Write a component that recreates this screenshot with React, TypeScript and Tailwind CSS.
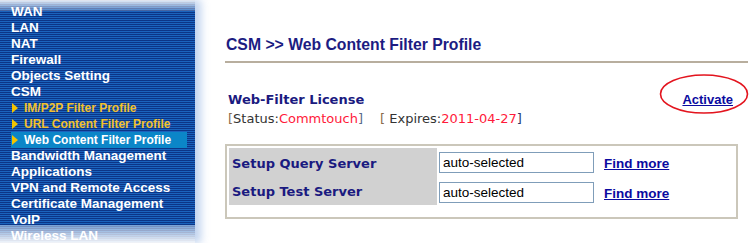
import React from "react";

const menu: { label: string; sub?: boolean; active?: boolean }[] = [
  { label: "WAN" },
  { label: "LAN" },
  { label: "NAT" },
  { label: "Firewall" },
  { label: "Objects Setting" },
  { label: "CSM" },
  { label: "IM/P2P Filter Profile", sub: true },
  { label: "URL Content Filter Profile", sub: true },
  { label: "Web Content Filter Profile", sub: true, active: true },
  { label: "Bandwidth Management" },
  { label: "Applications" },
  { label: "VPN and Remote Access" },
  { label: "Certificate Management" },
  { label: "VoIP" },
  { label: "Wireless LAN" },
];

function Sidebar() {
  return (
    <div className="relative w-[195px] h-[243px] shrink-0 overflow-hidden bg-[repeating-linear-gradient(to_bottom,#0c3587_0px,#0c3587_1px,#1a63bd_1px,#1a63bd_2px)] shadow-[6px_0_8px_rgba(120,160,220,0.45)]">
      <ul className="pt-[4px] font-['Liberation_Sans',Arial,sans-serif] font-bold leading-[16px]">
        {menu.map((m) => (
          <li
            key={m.label}
            className={`ml-[11px] w-[176px] h-[16px] flex items-center whitespace-nowrap ${
              m.sub ? "text-[12px]" : "text-[13.5px]"
            } ${m.active ? "bg-[#0b86c8] text-white" : m.sub ? "text-[#f2c12e]" : "text-white"}`}
          >
            {m.sub && (
              <span className="ml-[1px] mr-[6px] w-0 h-0 border-y-[5px] border-y-transparent border-l-[6px] border-l-[#f4c400]" />
            )}
            {m.label}
          </li>
        ))}
      </ul>
      {/* fade at top and bottom */}
      <div className="absolute inset-x-0 top-0 h-[11px] bg-gradient-to-b from-white/90 to-white/20" />
      <div className="absolute inset-x-0 bottom-0 h-[18px] bg-gradient-to-t from-white/95 to-white/40" />
    </div>
  );
}

export default function App() {
  return (
    <div className="flex w-[752px] h-[243px] bg-white overflow-hidden">
      <Sidebar />

      <div className="flex-1 pl-[30px] pt-[35px]">
        <h1 className="pl-[1px] font-['Liberation_Sans',Arial,sans-serif] text-[15.75px] font-bold leading-[20px] text-[#1c1c82]">
          CSM &gt;&gt; Web Content Filter Profile
        </h1>
        <div className="mt-[6px] mr-[4px] h-[2px] bg-[#b8ae9e]" />

        <div className="mt-[27px] flex items-start pr-[3px]">
          <div className="pl-[3px] flex-1 font-['DejaVu_Sans',Verdana,sans-serif] text-[13px] leading-[19px]">
            <div className="font-bold text-[#1a1a80]">Web-Filter License</div>
            <div className="text-[#333]">
              <span className="text-[#8a6a4a]">[</span>Status:<span className="text-[#ff1a3a]">Commtouch</span>
              <span className="text-[#5a6a8a]">]</span>
              <span className="ml-[17px]">
                <span className="text-[#8a6a4a]">[</span> Expires:<span className="text-[#ff1a3a]">2011-04-27</span>
                <span className="text-[#2a3a6a]">]</span>
              </span>
            </div>
          </div>
          <div className="relative mr-[16px] mt-[2px]">
            <a
              href="#"
              className="block font-['Liberation_Sans',Arial,sans-serif] text-[13px] font-bold leading-[16px] text-[#0a0aa0] underline"
            >
              Activate
            </a>
            <svg
              className="absolute left-[-23px] top-[-19px]"
              width="90"
              height="42"
              viewBox="0 0 90 42"
            >
              <ellipse cx="45" cy="21" rx="43.5" ry="19" fill="none" stroke="#e3141e" strokeWidth="1.6" />
            </svg>
          </div>
        </div>

        <div className="mt-[16px] mr-[14px] border-2 border-[#cbc7ba] pt-[2px] pl-[2px] pb-[12px]">
          <div className="flex">
            <div className="w-[208px] bg-[#d1d1d1] pl-[3px] pt-[7px] font-['DejaVu_Sans',Verdana,sans-serif] text-[13px] font-bold text-[#1a1a80]">
              <div className="h-[28px] leading-[18px]">Setup Query Server</div>
              <div className="h-[21px] leading-[18px]">Setup Test Server</div>
            </div>
            <div className="pl-[2px] pt-[3px] flex flex-col gap-[7px]">
              {["a", "b"].map((k) => (
                <div key={k} className="flex items-center">
                  <input
                    defaultValue="auto-selected"
                    className="w-[155px] h-[21px] border border-[#7f9db9] px-[3px] font-['Liberation_Sans',Arial,sans-serif] text-[13.5px] text-black outline-none"
                  />
                  <a
                    href="#"
                    className="ml-[10px] mt-[3px] font-['Liberation_Sans',Arial,sans-serif] text-[13.5px] font-bold text-[#0a0aa0] underline"
                  >
                    Find more
                  </a>
                </div>
              ))}
            </div>
          </div>
        </div>
      </div>
    </div>
  );
}
